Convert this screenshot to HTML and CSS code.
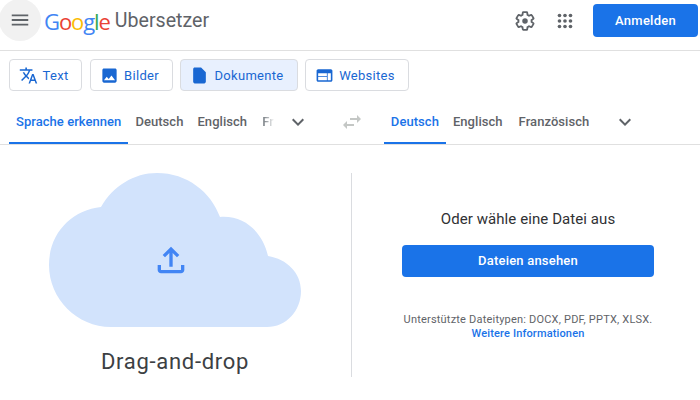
FILE: index.html
```html
<!DOCTYPE html>
<html lang="de">
<head>
  <meta charset="UTF-8">
  <meta name="viewport" content="width=device-width, initial-scale=1.0">
  <title>Google Übersetzer</title>
  <link rel="stylesheet" href="styles.css">
</head>
<body>

  <div class="navbar">
    <div class="menu-btn">
      <svg width="22" height="22" viewBox="0 0 24 24"><path d="M3 18h18v-2H3v2zm0-5h18v-2H3v2zm0-7v2h18V6H3z"/></svg>
    </div>
    <a href="#" class="logo">
      <span class="g-blue">G</span><span class="g-red">o</span><span class="g-yellow">o</span><span class="g-blue">g</span><span class="g-green">l</span><span class="g-red">e</span>
    </a>
    <span class="product">Ubersetzer</span>
    <div class="nav-right">
      <svg class="settings" width="22" height="22" viewBox="0 0 24 24"><path d="M19.14 12.94c.04-.3.06-.61.06-.94 0-.32-.02-.64-.07-.94l2.03-1.58c.18-.14.23-.41.12-.61l-1.92-3.32c-.12-.22-.37-.29-.59-.22l-2.39.96c-.5-.38-1.03-.7-1.62-.94l-.36-2.54c-.04-.24-.24-.41-.48-.41h-3.84c-.24 0-.43.17-.47.41l-.36 2.54c-.59.24-1.13.57-1.62.94l-2.39-.96c-.22-.08-.47 0-.59.22L2.74 8.87c-.12.21-.08.47.12.61l2.03 1.58c-.05.3-.09.63-.09.94s.02.64.07.94l-2.03 1.58c-.18.14-.23.41-.12.61l1.92 3.32c.12.22.37.29.59.22l2.39-.96c.5.38 1.03.7 1.62.94l.36 2.54c.05.24.24.41.48.41h3.84c.24 0 .44-.17.47-.41l.36-2.54c.59-.24 1.13-.56 1.62-.94l2.39.96c.22.08.47 0 .59-.22l1.92-3.32c.12-.22.07-.47-.12-.61l-2.01-1.58z" fill="none" stroke="#5f6368" stroke-width="2"/><circle cx="12" cy="12" r="3" fill="#5f6368"/></svg>
      <svg class="apps" width="22" height="22" viewBox="0 0 24 24" fill="#5f6368">
        <circle cx="6" cy="6" r="2"/><circle cx="12" cy="6" r="2"/><circle cx="18" cy="6" r="2"/>
        <circle cx="6" cy="12" r="2"/><circle cx="12" cy="12" r="2"/><circle cx="18" cy="12" r="2"/>
        <circle cx="6" cy="18" r="2"/><circle cx="12" cy="18" r="2"/><circle cx="18" cy="18" r="2"/>
      </svg>
      <a href="#" class="signin">Anmelden</a>
    </div>
  </div>

  <div class="mode-tabs">
    <a href="#" class="mode mode-text">
      <svg width="19" height="19" viewBox="0 0 24 24"><path d="M12.87 15.07l-2.54-2.51.03-.03c1.74-1.94 2.98-4.17 3.71-6.53H17V4h-7V2H8v2H1v1.99h11.17C11.5 7.92 10.44 9.75 9 11.35 8.07 10.32 7.3 9.19 6.69 8h-2c.73 1.63 1.73 3.17 2.98 4.56l-5.09 5.02L4 19l5-5 3.11 3.11.76-2.04zM18.5 10h-2L12 22h2l1.12-3h4.75L21 22h2l-4.5-12zm-2.62 7l1.62-4.33L19.12 17h-3.24z"/></svg>
      Text
    </a>
    <a href="#" class="mode mode-images">
      <svg width="19" height="19" viewBox="0 0 24 24"><path d="M21 19V5c0-1.1-.9-2-2-2H5c-1.1 0-2 .9-2 2v14c0 1.1.9 2 2 2h14c1.1 0 2-.9 2-2zM8.5 13.5l2.5 3.01L14.5 12l4.5 6H5l3.5-4.5z"/></svg>
      Bilder
    </a>
    <a href="#" class="mode mode-docs active">
      <svg width="19" height="19" viewBox="0 0 24 24"><path d="M6 2c-1.1 0-1.99.9-1.99 2L4 20c0 1.1.89 2 1.99 2H18c1.1 0 2-.9 2-2V8l-6-6H6z"/></svg>
      Dokumente
    </a>
    <a href="#" class="mode mode-web">
      <svg width="19" height="19" viewBox="0 0 24 24"><path d="M20 4H4c-1.1 0-1.99.9-1.99 2L2 18c0 1.1.9 2 2 2h16c1.1 0 2-.9 2-2V6c0-1.1-.9-2-2-2zm-5 14H4v-4h11v4zm0-5H4V9h11v4zm5 5h-4V9h4v9z"/></svg>
      Websites
    </a>
  </div>

  <div class="lang-bar">
    <div class="lang-side source">
      <a href="#" class="lang selected">Sprache erkennen</a>
      <a href="#" class="lang">Deutsch</a>
      <a href="#" class="lang">Englisch</a>
      <span class="lang faded">Fr</span>
      <svg class="chevron" width="24" height="24" viewBox="0 0 24 24"><path d="M7.41 8.59L12 13.17l4.59-4.58L18 10l-6 6-6-6 1.41-1.41z"/></svg>
    </div>
    <svg class="swap" width="24" height="24" viewBox="0 0 24 24"><path d="M6.99 11L3 15l3.99 4v-3H14v-2H6.99v-3zM21 9l-3.99-4v3H10v2h7.01v3L21 9z"/></svg>
    <div class="lang-side target">
      <a href="#" class="lang selected">Deutsch</a>
      <a href="#" class="lang">Englisch</a>
      <a href="#" class="lang last">Französisch</a>
      <svg class="chevron" width="24" height="24" viewBox="0 0 24 24"><path d="M7.41 8.59L12 13.17l4.59-4.58L18 10l-6 6-6-6 1.41-1.41z"/></svg>
    </div>
  </div>

  <div class="upload-area">
    <div class="drop-side">
      <div class="cloud">
        <svg width="252" height="154" viewBox="0 0 252 154"><path fill="#d2e3fc" d="M62 154C28 154 0 126 0 92C0 60 23 37 52 34C64 13 85 0 108 0C138 0 162 19 171 44C196 42 214 60 219 83C238 86 252 100 252 118C252 138 237 154 218 154Z"/></svg>
        <svg class="upload-icon" width="40" height="40" viewBox="0 0 24 24"><path d="M18 15v3H6v-3H4v3c0 1.1.9 2 2 2h12c1.1 0 2-.9 2-2v-3h-2zM7 9l1.41 1.41L11 7.83V16h2V7.83l2.59 2.58L17 9l-5-5-5 5z"/></svg>
      </div>
      <div class="drop-label">Drag-and-drop</div>
    </div>
    <div class="pick-side">
      <div class="pick-title">Oder wähle eine Datei aus</div>
      <a href="#" class="browse">Dateien ansehen</a>
      <div class="hint">Unterstützte Dateitypen: DOCX, PDF, PPTX, XLSX.</div>
      <a href="#" class="more">Weitere Informationen</a>
    </div>
  </div>

</body>
</html>
```

FILE: styles.css
```css
body {
  font-family: Roboto, Arial, sans-serif;
  margin: 0;
  height: 400px;
  overflow: hidden;
  background-color: #fff;
}

a { text-decoration: none; }

.navbar {
  height: 50px;
  border-bottom: 1px solid #e0e0e0;
  display: flex;
  align-items: flex-start;
}

.menu-btn {
  width: 42px;
  height: 42px;
  margin: -1px 0 0 -1px;
  border-radius: 50%;
  background-color: #f1f1f1;
  display: flex;
  align-items: center;
  justify-content: center;
  flex: none;
}

.menu-btn svg { fill: #5f6368; }

.logo {
  margin: 5px 0 0 3px;
  font-family: "Open Sans", Roboto, sans-serif;
  font-size: 22px;
  line-height: 32px;
  letter-spacing: -1.1px;
}

.g-blue { color: #4285f4; }
.g-red { color: #ea4335; }
.g-yellow { color: #fbbc04; }
.g-green { color: #34a853; }

.product {
  margin: 5px 0 0 5px;
  font-size: 19.6px;
  line-height: 32px;
  color: #5f6368;
}

.nav-right {
  margin-left: auto;
  display: flex;
  align-items: center;
  padding: 4px 2px 0 0;
}

.settings { margin-right: 18px; }
.apps { margin-right: 17px; }

.signin {
  width: 105px;
  height: 33px;
  line-height: 33px;
  text-align: center;
  border-radius: 4px;
  background-color: #1a73e8;
  color: #fff;
  font-size: 13px;
  font-weight: 500;
  letter-spacing: .25px;
}

.mode-tabs {
  display: flex;
  gap: 7px;
  padding: 8px 0 0 9px;
}

.mode {
  height: 30px;
  padding-right: 4px;
  border: 1px solid #dadce0;
  border-radius: 4px;
  display: flex;
  align-items: center;
  justify-content: center;
  gap: 3px;
  font-size: 13px;
  letter-spacing: .3px;
  color: #1967d2;
}

.mode svg { fill: #1967d2; margin-right: 2px; }
.mode-text { width: 67px; }
.mode-images { width: 77px; margin-left: 1px; }
.mode-docs { width: 112px; }
.mode-web { width: 98px; }
.mode.active { background-color: #e8f0fe; }

.lang-bar {
  height: 45px;
  margin-top: 8px;
  border-bottom: 1px solid #e0e0e0;
  display: flex;
  align-items: stretch;
}

.lang-side {
  display: flex;
  align-items: stretch;
}

.source { padding-left: 9px; }
.target { margin-left: 20px; }

.lang {
  display: flex;
  align-items: center;
  padding: 1px 7px 0;
  border-bottom: 2px solid transparent;
  font-size: 13px;
  font-weight: 500;
  letter-spacing: .05px;
  color: #5f6368;
  white-space: nowrap;
}

.lang.last { margin-left: 2px; }

.lang.selected {
  color: #1a73e8;
  border-bottom-color: #1a73e8;
}

.lang.faded {
  margin-left: 1px;
  color: #80868b;
  mask-image: linear-gradient(90deg, #000 35%, transparent 75%);
}

.chevron {
  align-self: center;
  fill: #5f6368;
  margin-left: 17px;
}

.source .chevron { margin-left: 5px; }

.swap {
  align-self: center;
  fill: #c4c7c5;
  margin-left: 30px;
}

.upload-area {
  display: flex;
  padding-top: 28px;
}

.drop-side {
  width: 351px;
  height: 204px;
  border-right: 1px solid #dadce0;
  display: flex;
  flex-direction: column;
  align-items: center;
  flex: none;
}

.cloud {
  position: relative;
  height: 154px;
  margin-left: -1px;
}

.cloud svg { display: block; }

.upload-icon {
  position: absolute;
  left: 102px;
  top: 67px;
  fill: #4285f4;
}

.drop-label {
  margin: 21px 0 0 -1px;
  font-size: 22px;
  line-height: 28px;
  color: #3c4043;
  letter-spacing: .7px;
}

.pick-side {
  flex: 1;
  display: flex;
  flex-direction: column;
  align-items: center;
  padding: 36px 0 0 4px;
}

.pick-title {
  font-size: 15px;
  line-height: 20px;
  letter-spacing: .08px;
  color: #303134;
}

.browse {
  width: 252px;
  height: 32px;
  line-height: 32px;
  margin-top: 16px;
  text-align: center;
  border-radius: 4px;
  background-color: #1a73e8;
  color: #fff;
  font-size: 13px;
  font-weight: 500;
  letter-spacing: .2px;
}

.hint {
  margin-top: 36px;
  font-size: 11px;
  line-height: 14px;
  letter-spacing: .2px;
  color: #5f6368;
}

.more {
  font-size: 11px;
  line-height: 14px;
  font-weight: 500;
  letter-spacing: .15px;
  color: #1a73e8;
}
```
